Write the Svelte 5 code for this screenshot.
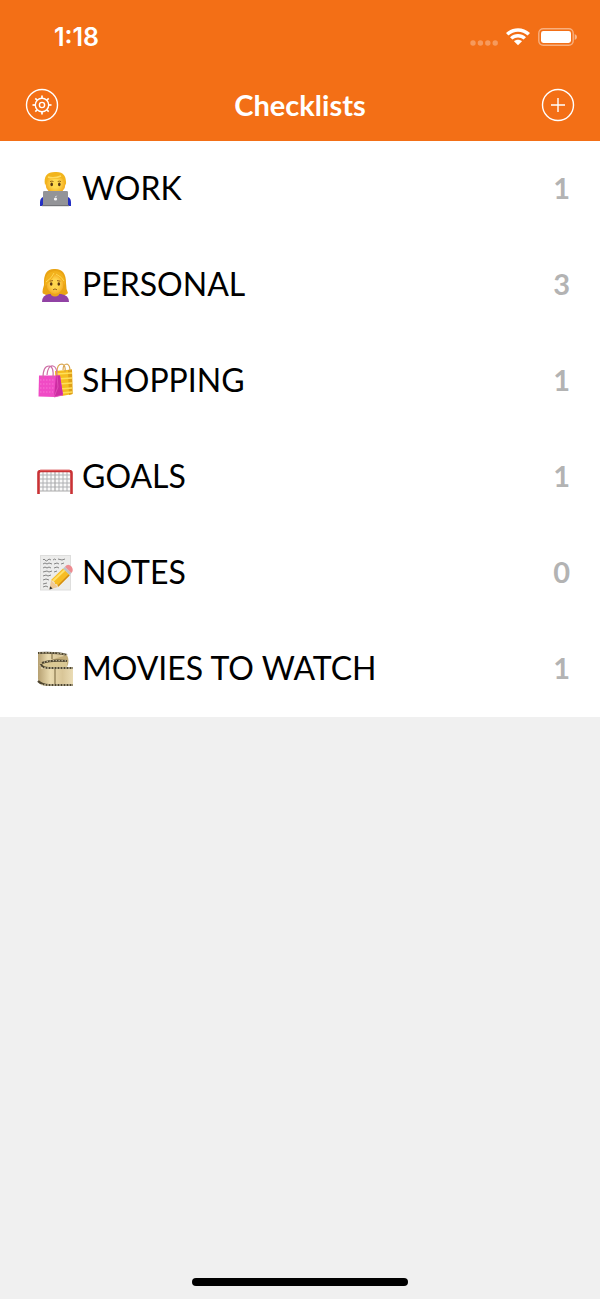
<script>
  const lists = [
    { icon: 'work', name: 'WORK', count: 1 },
    { icon: 'personal', name: 'PERSONAL', count: 3 },
    { icon: 'shopping', name: 'SHOPPING', count: 1 },
    { icon: 'goals', name: 'GOALS', count: 1 },
    { icon: 'notes', name: 'NOTES', count: 0 },
    { icon: 'movies', name: 'MOVIES TO WATCH', count: 1 }
  ];
  const teeth = [0, 45, 90, 135, 180, 225, 270, 315];
  const holes = Array.from({ length: 11 }, (_, i) => i);
</script>

<div class="screen">
  <header>
    <div class="status">
      <time>1:18</time>
      <div class="signals">
        <svg width="28" height="20" viewBox="0 0 28 20" aria-hidden="true" fill="#fff" opacity=".3">
          <circle cx="3" cy="16" r="2.7" /><circle cx="10.4" cy="16" r="2.7" /><circle cx="17.8" cy="16" r="2.7" /><circle cx="25.2" cy="16" r="2.7" />
        </svg>
        <svg width="24" height="20" viewBox="0 0 24 20" aria-hidden="true" fill="#fff">
          <path d="M0 6.1C6.6-.4 17.4-.4 24 6.1L21.6 8.5C16.3 3.4 7.7 3.4 2.4 8.5Z" />
          <path d="M4 10.2C8.5 6 15.5 6 20 10.2L17.6 12.6C14.4 9.7 9.6 9.7 6.4 12.6Z" />
          <path d="M8 14.2C10.3 12.2 13.7 12.2 16 14.2L12 18.3Z" />
        </svg>
        <svg width="39" height="20" viewBox="0 0 39 20" aria-hidden="true">
          <rect x=".8" y="1.8" width="34.4" height="16.4" rx="4.4" fill="none" stroke="#fff" stroke-opacity=".45" stroke-width="1.4" />
          <rect x="3" y="4" width="30" height="12" rx="2.4" fill="#fff" />
          <path d="M36.7 7Q39 8 39 10T36.7 13Z" fill="#fff" opacity=".5" />
        </svg>
      </div>
    </div>
    <nav>
      <button aria-label="Settings">
        <svg width="34" height="34" viewBox="0 0 34 34" fill="none" stroke="#fff" stroke-width="1.4">
          <circle cx="17" cy="17" r="15.5" />
          <circle cx="17" cy="17" r="6.7" />
          <circle cx="17" cy="17" r="2.6" />
          {#each teeth as angle}
            <path d="M17 10.3V7.5" stroke-width="1.7" transform="rotate({angle} 17 17)" />
          {/each}
        </svg>
      </button>
      <h1>Checklists</h1>
      <button aria-label="Add checklist">
        <svg width="34" height="34" viewBox="0 0 34 34" fill="none" stroke="#fff" stroke-width="1.4">
          <circle cx="17" cy="17" r="15.5" />
          <path d="M17 10V24M10 17H24" />
        </svg>
      </button>
    </nav>
  </header>

  <main>
    <ul>
      {#each lists as list}
        <li>
          <a href="#{list.icon}">
            <svg class="emoji" width="36" height="36" viewBox="0 0 36 36" aria-hidden="true">
              {#if list.icon === 'work'}
                <defs><radialGradient id="skin"><stop offset=".4" stop-color="#ffd94f" /><stop offset="1" stop-color="#f3aa1d" /></radialGradient></defs>
                <path d="M3 35V31Q3 26 9 25H28Q34 26 34 31V35Z" fill="#2430c4" />
                <path d="M13 20H23V26H13Z" fill="#eda51c" />
                <ellipse cx="18.5" cy="12.5" rx="10" ry="10.5" fill="url(#skin)" />
                <path d="M8 14C6.5 5 10 1 18 1Q30 0 29 14L27 11Q27 8 24 7Q16 9 11 7Q10 9 10 11Z" fill="#f2b51d" />
                <path d="M11 6Q17 8 24 5" fill="none" stroke="#ffdc62" stroke-width="1.5" />
                <ellipse cx="14.7" cy="13.4" rx="1.3" ry="1.8" fill="#573614" />
                <ellipse cx="22.3" cy="13.4" rx="1.3" ry="1.8" fill="#573614" />
                <path d="M13 10.6Q15 9.7 16.5 10.5M20.7 10.5Q22.5 9.7 24 10.6" fill="none" stroke="#9a6817" />
                <rect x="6" y="20" width="25" height="15" rx="1.3" fill="#939498" />
                <path d="M5 34H32V35.2H5Z" fill="#737478" />
                <circle cx="18.5" cy="28" r="1.6" fill="#f4f4f4" /><path d="M18.5 26L19.5 24.8" stroke="#f4f4f4" />
              {:else if list.icon === 'personal'}
                <defs><radialGradient id="face"><stop offset=".45" stop-color="#ffd64e" /><stop offset="1" stop-color="#f5ae28" /></radialGradient></defs>
                <path d="M7 27Q4 27 7 18Q6 2 17 2Q29 1 29 16Q29 22 31 26Q29 29 22 28H14Q10 29 7 27Z" fill="#e9a414" />
                <path d="M5 35Q5 28 12 27H24Q32 28 32 35Z" fill="#9142a4" />
                <path d="M14 24H22V28Q18 31 14 28Z" fill="#eba51d" />
                <ellipse cx="18" cy="17" rx="8.5" ry="10" fill="url(#face)" />
                <path d="M8 19Q7 5 18 4Q28 4 28 18Q25 12 18 7Q15 13 8 19Z" fill="#f2b11c" />
                <path d="M17 6Q15 11 9 15M19 7Q25 10 27 14" fill="none" stroke="#ffd653" />
                <ellipse cx="14.2" cy="17" rx="1.3" ry="1.8" fill="#5b3610" />
                <ellipse cx="21.8" cy="17" rx="1.3" ry="1.8" fill="#5b3610" />
                <path d="M12.7 14.2L16 13.6M20 13.6L23.3 14.2M16 22.8Q18 21 20 22.8" fill="none" stroke="#97601b" />
              {:else if list.icon === 'shopping'}
                <path d="M18 8L35 6.5L35.5 31L25 33L19 31Z" fill="#f5bd1f" />
                <path d="M31 7L35 6.5L35.5 31L32 32Z" fill="#dfa018" />
                <path d="M20 11L35 10M20 16L35 15M22 21L35 20M23 26L35 25M24 30L35 29" stroke="#ffdf58" stroke-width="1.6" />
                <path d="M20 9Q20 1 25 1Q29 2 28 9M26 7Q26 1 30 1Q33 2 33 8" fill="none" stroke="#d9a44a" stroke-width="1.2" />
                <path d="M2 12.5H23L26 32L18 34L1.5 33.5Z" fill="#f04bc5" />
                <path d="M19 12.5H23L26 32L17 34Z" fill="#cd2da2" />
                <path d="M20 13L21 24L17 34L26 32" fill="none" stroke="#e456bb" stroke-width=".8" />
                <path d="M3 17H18M3 21H18M3 25H17M3 29H16" stroke="#f981d8" stroke-width=".8" stroke-dasharray="1.5 1.5" />
                <path d="M6 15Q6 3 12 3Q17 3 16 15M10 12Q11 2 16 3Q20 4 20 12" fill="none" stroke="#ce6fa6" stroke-width="1.2" />
              {:else if list.icon === 'goals'}
                <path d="M3 13H33V32H3Z" fill="#fafafa" />
                <path d="M3 16H33M3 20H33M3 24H33M3 28H33M6 13V32M10 13V32M14 13V32M22 13V32M26 13V32M30 13V32" stroke="#aeb0b3" stroke-width="1" />
                <path d="M18 13V32M3 32H33" stroke="#aaa" stroke-width="1.2" />
                <path d="M1.5 35V14Q1.5 12 4 12H32Q34.5 12 34.5 14V35" fill="none" stroke="#c93235" stroke-width="2.6" />
                <path d="M3 11.3H33" stroke="#ed7775" stroke-width=".7" />
              {:else if list.icon === 'notes'}
                <rect x="3.5" y=".5" width="30" height="34.5" fill="#ececeb" stroke="#dededd" />
                <path d="M6 5Q7 3 8 5T11 5L12 4L14 5M16 5Q18 3 19 5M21 4L25 5L28 4M6 9L8 8L10 9L12 8L15 9M17 9L20 8L22 9M24 9L27 8M6 13Q8 11 10 13L12 12L14 13M17 13L20 12L22 13M6 17L10 16L12 17L15 16M17 17L20 16M6 21L9 20L11 21L14 20M6 25L9 24L12 25M6 29L10 28M6 32L9 31L11 32" fill="none" stroke="#858585" stroke-width="1" />
                <path d="M12.5 34.5L14 25L21 32Z" fill="#efc997" /><path d="M12.5 34.5L13.1 31.3L15.6 33.6Z" fill="#333" />
                <path d="M14 25L26 13.5L33 20L21 32Q21 29 18 29Q18 26 14 25Z" fill="#f7bd24" />
                <path d="M16 26L28 14.8" stroke="#ffe06b" stroke-width="2" /><path d="M21 31L32 20" stroke="#d28b16" stroke-width="1.4" />
                <path d="M26 13.5L28 11.7L34.5 18L32.5 20Z" fill="#bfc2c5" />
                <path d="M28 11.7Q31 8 34.5 11.5Q37 15 34.5 18Z" fill="#ed8c91" />
              {:else}
                <defs><linearGradient id="film"><stop stop-color="#b6a071" /><stop offset=".35" stop-color="#eadbb0" /><stop offset=".7" stop-color="#d9c698" /><stop offset="1" stop-color="#eadcb5" /></linearGradient></defs>
                <path d="M1 2Q20 1 30 4V14H1Z" fill="url(#film)" />
                <path d="M1 2Q20 1 30 4" fill="none" stroke="#4e452f" stroke-width="2.2" />
                <path d="M30 4Q33 10 30 16H8Q3 15 4 12Z" fill="#c2ac78" />
                <path d="M4 12Q14 8 30 10V17H8Z" fill="#dac894" />
                <path d="M5 12Q14 8.5 30 10" fill="none" stroke="#4e452f" stroke-width="2.2" />
                <path d="M1 13Q4 16 10 16H36V35H10Q1 34 1 28Z" fill="url(#film)" />
                <path d="M4 13Q5 17 12 17H36M1 30Q5 34 12 34H36" fill="none" stroke="#4e452f" stroke-width="2.2" />
                <path d="M18 18V33M15 3V8" stroke="#74623b" stroke-width="1" />
                {#each holes as hole}
                  <path d="M{5 + hole * 3} 16.2V17.8M{5 + hole * 3} 33.2V34.8" stroke="#f7edcf" stroke-width="1.2" />
                {/each}
                <path d="M2 2Q20 1 30 4M7 11.2Q16 8.8 30 10" fill="none" stroke="#f7edcf" stroke-width="1" stroke-dasharray="1.2 1.8" />
              {/if}
            </svg>
            <span class="name">{list.name}</span>
            <span class="count">{list.count}</span>
          </a>
        </li>
      {/each}
    </ul>
  </main>
  <div class="home"></div>
</div>

<style>
  :global(body) { margin: 0; background: #f0f0f0; }
  .screen {
    min-height: 100vh;
    display: flex;
    flex-direction: column;
    background: #f0f0f0;
    font-family: Lato, "Open Sans", sans-serif;
  }
  header { background: #f36f16; color: #fff; }
  .status {
    display: flex;
    align-items: center;
    justify-content: space-between;
    height: 69px;
    padding: 5px 23px 0 54px;
    box-sizing: border-box;
  }
  time { font-size: 25px; line-height: 32px; font-family: Inter, sans-serif; font-weight: 600; }
  .signals { display: flex; align-items: center; gap: 8px; }
  .signals svg { display: block; }
  nav {
    display: flex;
    align-items: center;
    justify-content: space-between;
    height: 72px;
    padding: 0 25px;
  }
  button { width: 34px; height: 34px; padding: 0; border: 0; background: none; cursor: pointer; }
  button svg { display: block; }
  h1 { margin: 0; font-size: 29px; line-height: 36px; font-weight: 700; }
  ul { margin: 0; padding: 0; list-style: none; background: #fff; }
  a {
    display: flex;
    align-items: center;
    height: 96px;
    padding: 0 30px 0 37px;
    box-sizing: border-box;
    color: #000;
    text-decoration: none;
  }
  .emoji { flex: none; margin-right: 9px; }
  .name, .count { padding-bottom: 2px; line-height: 40px; }
  .name { flex: 1; font-size: 32px; }
  .count { color: #b3b3b3; font-size: 29px; font-weight: 700; }
  .home {
    width: 36%;
    height: 8px;
    margin: auto auto 13px;
    border-radius: 4px;
    background: #000;
  }
</style>
